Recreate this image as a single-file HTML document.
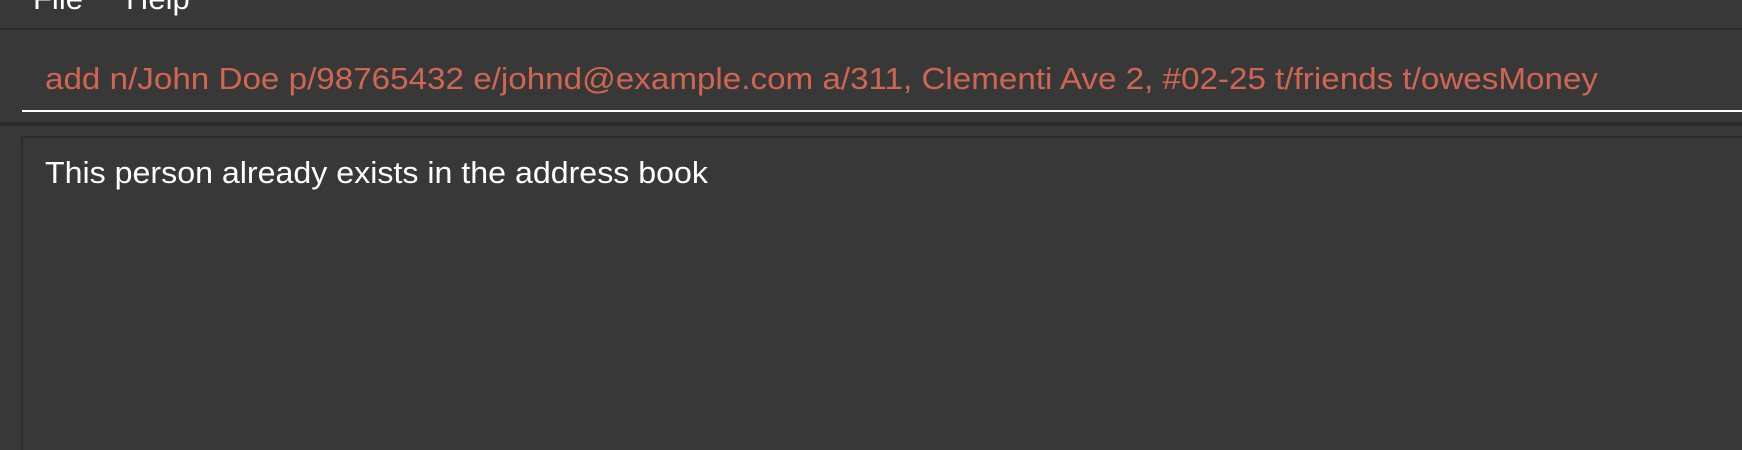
<!DOCTYPE html>
<html><head><meta charset="utf-8"><style>
html,body{margin:0;padding:0;background:#383838;width:1742px;height:450px;overflow:hidden}
svg{display:block}
</style></head><body>
<svg width="1742" height="450" xmlns="http://www.w3.org/2000/svg" font-family="Liberation Sans, Arial, sans-serif">
<rect width="1742" height="450" fill="#383838"/>
<text x="33" y="9" font-size="31" fill="#ffffff">File</text>
<text x="126" y="9" font-size="31" fill="#ffffff">Help</text>
<rect x="0" y="28" width="1742" height="2" fill="#2b2b2b"/>
<text x="45" y="89" font-size="31" fill="#d06651" textLength="1553" lengthAdjust="spacingAndGlyphs">add n/John Doe p/98765432 e/johnd@example.com a/311, Clementi Ave 2, #02-25 t/friends t/owesMoney</text>
<rect x="22" y="110" width="1720" height="2" fill="#ffffff"/>
<rect x="0" y="122" width="1742" height="4" fill="#2b2b2b"/>
<rect x="21" y="136" width="1721" height="2" fill="#2b2b2b"/>
<rect x="21" y="136" width="2" height="314" fill="#2b2b2b"/>
<text x="45" y="183" font-size="31" fill="#ffffff" textLength="663" lengthAdjust="spacingAndGlyphs">This person already exists in the address book</text>
</svg>
</body></html>
